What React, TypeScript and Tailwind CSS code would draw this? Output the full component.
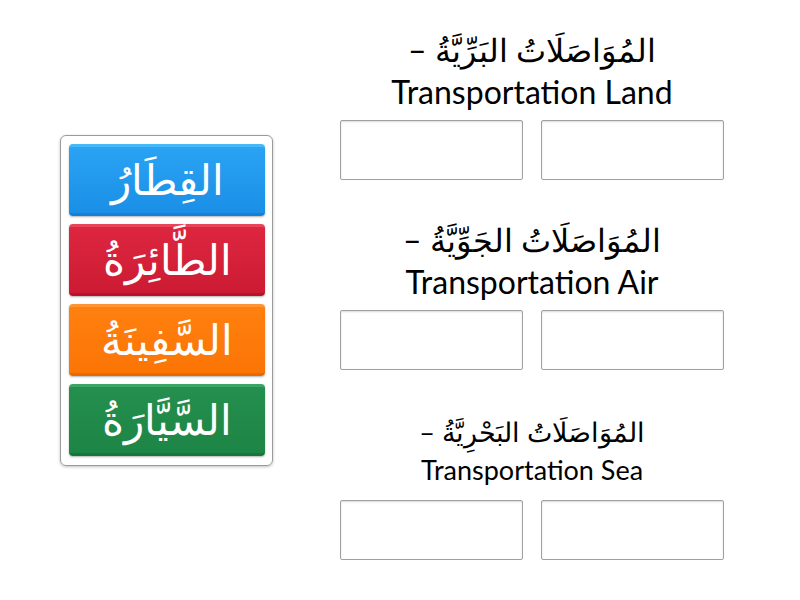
const tiles = [
  { text: "القِطَارُ", cls: "bg-gradient-to-b from-[#2aa3f4] to-[#1a8fe6] border-t-[3px] border-[#45b8fa] border-b-[3px] border-b-[#1580d4]" },
  { text: "الطَّائِرَةُ", cls: "bg-gradient-to-b from-[#dd2640] to-[#cc1b33] border-t-[3px] border-[#e8455a] border-b-[3px] border-b-[#b8132b]" },
  { text: "السَّفِينَةُ", cls: "bg-gradient-to-b from-[#ff800f] to-[#fb7505] border-t-[3px] border-[#ff9433] border-b-[3px] border-b-[#e86800]" },
  { text: "السَّيَّارَةُ", cls: "bg-gradient-to-b from-[#248f4e] to-[#1d8545] border-t-[3px] border-[#3aa565] border-b-[3px] border-b-[#16763b]" },
];

const groups = [
  { ar: "المُوَاصَلَاتُ البَرِّيَّةُ –", en: "Transportation Land", size: "text-[32px] leading-[42px]" },
  { ar: "المُوَاصَلَاتُ الجَوِّيَّةُ –", en: "Transportation Air", size: "text-[32px] leading-[42px]" },
  { ar: "المُوَاصَلَاتُ البَحْرِيَّةُ –", en: "Transportation Sea", size: "text-[27px] leading-[38px]" },
];

export default function App() {
  return (
    <div className="w-[800px] h-[600px] bg-white flex items-center font-['Lato',sans-serif] text-black">
      <div className="ml-[60px] w-[213px] border border-[#9a9a9a] rounded-[6px] shadow-[0_1px_3px_rgba(0,0,0,0.25)] pt-[8px] pb-[9px] pl-[8px] pr-[7px] flex flex-col gap-[8px]">
        {tiles.map((t) => (
          <div
            key={t.text}
            dir="rtl"
            className={`h-[72px] rounded-[4px] flex items-center justify-center text-white text-[42px] shadow-[0_1px_2px_rgba(0,0,0,0.3)] ${t.cls}`}
          >
            {t.text}
          </div>
        ))}
      </div>
      <div className="ml-[67px] w-[384px] flex flex-col gap-[40px] -mt-[10px]">
        {groups.map((g) => (
          <div key={g.en} className="flex flex-col">
            <div className={`h-[90px] pb-[8px] flex flex-col items-center justify-center text-center ${g.size}`}>
              <div dir="rtl">{g.ar}</div>
              <div>{g.en}</div>
            </div>
            <div className="flex gap-[18px]">
              <div className="w-[183px] h-[60px] border border-[#a0a0a0] rounded-[2px] shadow-[inset_0_1px_2px_rgba(0,0,0,0.15)]" />
              <div className="w-[183px] h-[60px] border border-[#a0a0a0] rounded-[2px] shadow-[inset_0_1px_2px_rgba(0,0,0,0.15)]" />
            </div>
          </div>
        ))}
      </div>
    </div>
  );
}
